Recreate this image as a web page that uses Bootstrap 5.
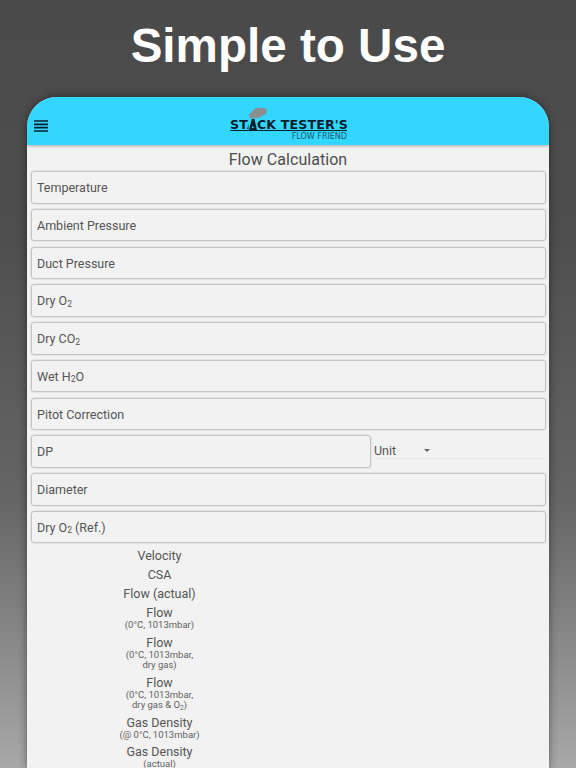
<!DOCTYPE html>
<html lang="en">
<head>
<meta charset="utf-8">
<title>Simple to Use</title>
<link rel="stylesheet" href="https://cdn.jsdelivr.net/npm/bootstrap@5.3.0/dist/css/bootstrap.min.css">
<style>
html,body{height:768px;overflow:hidden}
body{background:linear-gradient(#4a4a4a 0,#4e4e4e 30%,#656565 65%,#a8a8a8 100%);font-family:Roboto,sans-serif;color:#4d4d4d}
.promo-title{font:700 47.6px/1 "Liberation Sans",sans-serif;color:#fff;height:97px;padding-top:22px;margin:0;text-align:center}
.device{margin:0 27px;height:671px;border-radius:30px 30px 0 0;background:#f2f2f2;overflow:hidden;box-shadow:0 0 8px rgba(0,0,0,.45)}
.app-bar{height:48px;background:#33d6ff;box-shadow:0 1px 3px rgba(0,0,0,.3);position:relative}
.burger{width:14px;height:12px;flex:none;margin-left:7px;margin-top:10px}
.logo{width:117px;height:36px;position:absolute;left:203px;top:8px}
.logo-main{position:absolute;left:0;right:0;top:13px;font:700 12.6px/13px "DejaVu Sans",sans-serif;letter-spacing:.15px;color:#05202a;white-space:nowrap;border-bottom:1px solid #05202a;height:13px}
.logo-sub{position:absolute;right:0;top:27px;font:400 8px/9px "DejaVu Sans",sans-serif;color:#1d5a6c;white-space:nowrap}
.logo-art{position:absolute;left:0;top:0;width:117px;height:36px}
.screen-title{font-size:16px;line-height:20px;text-align:center;padding-top:5px;height:26px;letter-spacing:.05px;margin:0;font-weight:400}
.fields{padding:0 3px 0 4px;display:flex;flex-direction:column;gap:5.25px}
.field{height:32.5px;border:1px solid #c4c4c4;border-radius:3px;padding:0 5px;font-size:12.5px;line-height:32px;color:#555;box-shadow:0 0 0 .5px #d8d8d8}
.field sub{font-size:8.500px;bottom:-.2em}
.dp-field{width:340px;flex:none}
.unit{flex:1;margin-left:3px;height:32.5px;font-size:12.5px;line-height:32px;padding-right:1px;position:relative;color:#555}
.unit-line{border-bottom:1px solid #e4e4e4;height:24px;display:block}
.caret{position:absolute;left:50px;top:14px;width:0;height:0;border:3px solid transparent;border-top-color:#666;border-bottom:0}
.results{width:265px;padding-top:5px;text-align:center;color:#555}
.res{font-size:12.5px;line-height:15.5px;margin-bottom:3.5px}
.res small{display:block;font-size:9.500px;line-height:10.800px;margin-top:-.5px;color:#5f5f5f}
.res sub{font-size:6.500px;bottom:-.2em}
</style>
</head>
<body>
<h1 class="promo-title">Simple to Use</h1>
<div class="device">
  <div class="app-bar d-flex align-items-center">
    <svg class="burger" viewBox="0 0 14 12" aria-hidden="true"><path d="M0 1h14M0 4.300h14M0 7.600h14M0 11h14" stroke="#04212b" stroke-width="1.700" fill="none"/></svg>
    <div class="logo">
      <div class="logo-main">STACK TESTER'S</div>
      <div class="logo-sub">FLOW FRIEND</div>
      <svg class="logo-art" viewBox="0 0 117 36" aria-hidden="true">
        <path d="M20 13c-2-2-1-5 2-6 1-3 5-5 9-4 3-1 6 1 6 3 0 3-3 4-5 5-2 2-5 2-7 2-2 1-4 1-5 0z" fill="#8a8f92"/>
        <rect x="18.500" y="14.500" width="8.500" height="10.500" fill="#33d6ff"/>
        <path d="M21.800 14h2.600l2.600 11h-8z" fill="#05202a"/>
        <circle cx="22.800" cy="22.300" r="1" fill="#33d6ff"/>
      </svg>
    </div>
  </div>
  <h2 class="screen-title">Flow Calculation</h2>
  <div class="fields">
    <div class="field">Temperature</div>
    <div class="field">Ambient Pressure</div>
    <div class="field">Duct Pressure</div>
    <div class="field">Dry O<sub>2</sub></div>
    <div class="field">Dry CO<sub>2</sub></div>
    <div class="field">Wet H<sub>2</sub>O</div>
    <div class="field">Pitot Correction</div>
    <div class="d-flex">
      <div class="field dp-field">DP</div>
      <div class="unit"><span class="unit-line">Unit</span><span class="caret"></span></div>
    </div>
    <div class="field">Diameter</div>
    <div class="field">Dry O<sub>2</sub> (Ref.)</div>
  </div>
  <div class="results">
    <div class="res">Velocity</div>
    <div class="res">CSA</div>
    <div class="res">Flow (actual)</div>
    <div class="res">Flow<small>(0°C, 1013mbar)</small></div>
    <div class="res">Flow<small>(0°C, 1013mbar,<br>dry gas)</small></div>
    <div class="res">Flow<small>(0°C, 1013mbar,<br>dry gas &amp; O<sub>2</sub>)</small></div>
    <div class="res">Gas Density<small>(@ 0°C, 1013mbar)</small></div>
    <div class="res">Gas Density<small>(actual)</small></div>
  </div>
</div>
<script src="https://cdn.jsdelivr.net/npm/bootstrap@5.3.0/dist/js/bootstrap.bundle.min.js"></script>
</body>
</html>
